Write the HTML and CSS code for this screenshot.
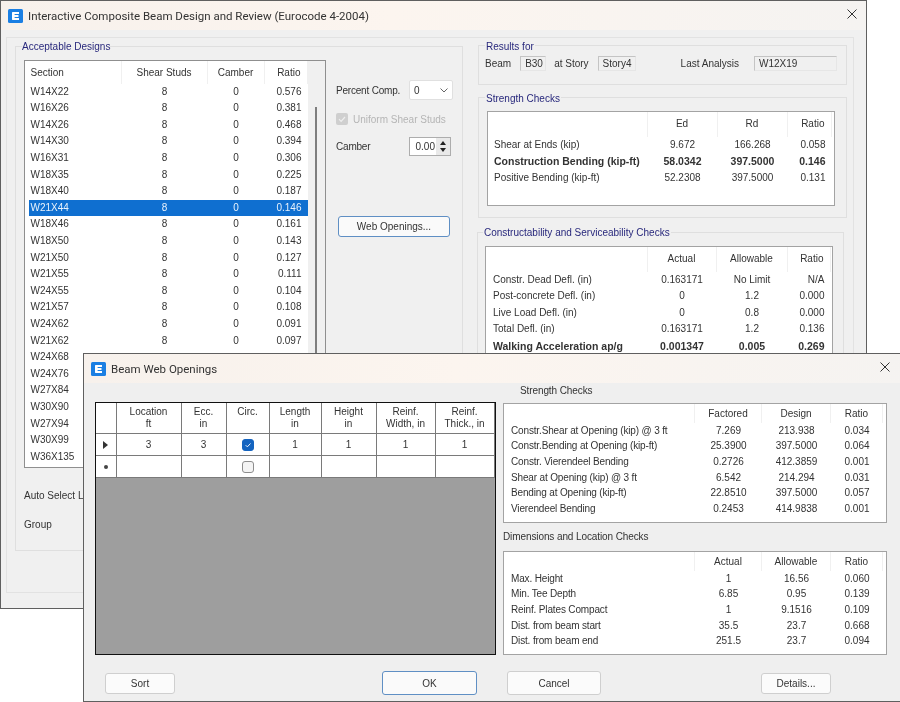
FILE: index.html
```html
<!DOCTYPE html>
<html lang="en">
<head>
<meta charset="utf-8">
<title>Interactive Composite Beam Design and Review</title>
<link rel="stylesheet" href="styles.css">
</head>
<body>
<div class="desktop">

  <section class="window main-window">
    <header class="titlebar">
      <svg class="app-icon" viewBox="0 0 15 14"><rect width="15" height="14" rx="1.5" fill="#1b7fe3"/><path d="M5 3h6v2H6.6v1.1H10.500v1.800H6.600V9H11v2H5C4.200 11 4 10.600 4 10V4C4 3.400 4.200 3 5 3Z" fill="#fff"/></svg>
      <span class="title-text">Interactive Composite Beam Design and Review (Eurocode 4-2004)</span>
      <svg class="close" viewBox="0 0 10 10"><path d="M.5.500l9 9M9.500.500l-9 9" stroke="#333" stroke-width="1" fill="none"/></svg>
    </header>
    <div class="panel">
      <div class="group designs">
        <span class="legend">Acceptable Designs</span>
        <div class="designs-top">
          <div class="listbox">
            <div class="list-rows">
              <div class="list-row list-head"><span class="c-name">Section</span><span>Shear Studs</span><span>Camber</span><span class="c-ratio">Ratio</span></div>
              <div class="list-row"><span class="c-name">W14X22</span><span>8</span><span>0</span><span class="c-ratio">0.576</span></div>
              <div class="list-row"><span class="c-name">W16X26</span><span>8</span><span>0</span><span class="c-ratio">0.381</span></div>
              <div class="list-row"><span class="c-name">W14X26</span><span>8</span><span>0</span><span class="c-ratio">0.468</span></div>
              <div class="list-row"><span class="c-name">W14X30</span><span>8</span><span>0</span><span class="c-ratio">0.394</span></div>
              <div class="list-row"><span class="c-name">W16X31</span><span>8</span><span>0</span><span class="c-ratio">0.306</span></div>
              <div class="list-row"><span class="c-name">W18X35</span><span>8</span><span>0</span><span class="c-ratio">0.225</span></div>
              <div class="list-row"><span class="c-name">W18X40</span><span>8</span><span>0</span><span class="c-ratio">0.187</span></div>
              <div class="list-row selected"><span class="c-name">W21X44</span><span>8</span><span>0</span><span class="c-ratio">0.146</span></div>
              <div class="list-row"><span class="c-name">W18X46</span><span>8</span><span>0</span><span class="c-ratio">0.161</span></div>
              <div class="list-row"><span class="c-name">W18X50</span><span>8</span><span>0</span><span class="c-ratio">0.143</span></div>
              <div class="list-row"><span class="c-name">W21X50</span><span>8</span><span>0</span><span class="c-ratio">0.127</span></div>
              <div class="list-row"><span class="c-name">W21X55</span><span>8</span><span>0</span><span class="c-ratio">0.111</span></div>
              <div class="list-row"><span class="c-name">W24X55</span><span>8</span><span>0</span><span class="c-ratio">0.104</span></div>
              <div class="list-row"><span class="c-name">W21X57</span><span>8</span><span>0</span><span class="c-ratio">0.108</span></div>
              <div class="list-row"><span class="c-name">W24X62</span><span>8</span><span>0</span><span class="c-ratio">0.091</span></div>
              <div class="list-row"><span class="c-name">W21X62</span><span>8</span><span>0</span><span class="c-ratio">0.097</span></div>
              <div class="list-row"><span class="c-name">W24X68</span></div>
              <div class="list-row"><span class="c-name">W24X76</span></div>
              <div class="list-row"><span class="c-name">W27X84</span></div>
              <div class="list-row"><span class="c-name">W30X90</span></div>
              <div class="list-row"><span class="c-name">W27X94</span></div>
              <div class="list-row"><span class="c-name">W30X99</span></div>
              <div class="list-row"><span class="c-name">W36X135</span></div>
            </div>
            <div class="list-scroll"><div class="list-thumb"></div></div>
          </div>
          <div class="options">
            <div class="opt-row opt-percent">
              <span class="opt-label">Percent Comp.</span>
              <div class="select"><span>0</span><svg viewBox="0 0 8 5" class="chev"><path d="M.5.500L4 4 7.500.500" fill="none" stroke="#666"/></svg></div>
            </div>
            <div class="opt-row opt-uniform">
              <span class="check-disabled"><svg viewBox="0 0 12 12"><path d="M3 6.200l2.100 2.100L9 4" fill="none" stroke="#eee" stroke-width="1.200"/></svg></span>
              <span class="disabled-text">Uniform Shear Studs</span>
            </div>
            <div class="opt-row opt-camber">
              <span class="opt-label">Camber</span>
              <div class="spinner">
                <span class="spin-value">0.00</span>
                <span class="spin-btns"><span class="spin-up"></span><span class="spin-down"></span></span>
              </div>
            </div>
            <button class="btn btn-default web-btn">Web Openings...</button>
          </div>
        </div>
        <div class="auto-label">Auto Select List</div>
        <div class="group-label">Group</div>
      </div>

      <div class="results">
        <div class="group results-for">
          <span class="legend">Results for</span>
          <div class="results-line">
            <span>Beam</span><span class="ro ro-beam">B30</span>
            <span class="lbl-story">at Story</span><span class="ro ro-story">Story4</span>
            <span class="lbl-last">Last Analysis</span><span class="ro ro-last">W12X19</span>
          </div>
        </div>

        <div class="group strength">
          <span class="legend">Strength Checks</span>
          <div class="checks checks-a">
            <div class="chk-row chk-head"><span></span><span>Ed</span><span>Rd</span><span>Ratio</span></div>
            <div class="chk-row"><span>Shear at Ends (kip)</span><span>9.672</span><span>166.268</span><span>0.058</span></div>
            <div class="chk-row bold"><span>Construction Bending (kip-ft)</span><span>58.0342</span><span>397.5000</span><span>0.146</span></div>
            <div class="chk-row"><span>Positive Bending (kip-ft)</span><span>52.2308</span><span>397.5000</span><span>0.131</span></div>
          </div>
        </div>

        <div class="group service">
          <span class="legend">Constructability and Serviceability Checks</span>
          <div class="checks checks-b">
            <div class="chk-row chk-head"><span></span><span>Actual</span><span>Allowable</span><span>Ratio</span></div>
            <div class="chk-row"><span>Constr. Dead Defl. (in)</span><span>0.163171</span><span>No Limit</span><span>N/A</span></div>
            <div class="chk-row"><span>Post-concrete Defl. (in)</span><span>0</span><span>1.2</span><span>0.000</span></div>
            <div class="chk-row"><span>Live Load Defl. (in)</span><span>0</span><span>0.8</span><span>0.000</span></div>
            <div class="chk-row"><span>Total Defl. (in)</span><span>0.163171</span><span>1.2</span><span>0.136</span></div>
            <div class="chk-row bold"><span>Walking Acceleration ap/g</span><span>0.001347</span><span>0.005</span><span>0.269</span></div>
          </div>
        </div>
      </div>
    </div>
  </section>

  <section class="window web-window">
    <header class="titlebar">
      <svg class="app-icon" viewBox="0 0 15 14"><rect width="15" height="14" rx="1.5" fill="#1b7fe3"/><path d="M5 3h6v2H6.6v1.1H10.500v1.800H6.600V9H11v2H5C4.200 11 4 10.600 4 10V4C4 3.400 4.200 3 5 3Z" fill="#fff"/></svg>
      <span class="title-text small">Beam Web Openings</span>
      <svg class="close" viewBox="0 0 10 10"><path d="M.5.500l9 9M9.500.500l-9 9" stroke="#333" stroke-width="1" fill="none"/></svg>
    </header>
    <div class="web-body">
      <div class="web-main">
        <div class="grid">
          <div class="grid-row grid-head">
            <span></span><span>Location<br>ft</span><span>Ecc.<br>in</span><span>Circ.</span><span>Length<br>in</span><span>Height<br>in</span><span>Reinf.<br>Width, in</span><span>Reinf.<br>Thick., in</span>
          </div>
          <div class="grid-row grid-data">
            <span class="marker"><i class="tri"></i></span><span>3</span><span>3</span>
            <span><i class="cb cb-on"><svg viewBox="0 0 12 12"><path d="M3.200 6.200l2 2L9 4.200" fill="none" stroke="#fff" stroke-width="1.100"/></svg></i></span>
            <span>1</span><span>1</span><span>1</span><span>1</span>
          </div>
          <div class="grid-row grid-data">
            <span class="marker"><i class="dot"></i></span><span></span><span></span>
            <span><i class="cb"></i></span>
            <span></span><span></span><span></span><span></span>
          </div>
        </div>
        <div class="web-side">
          <div class="side-title first">Strength Checks</div>
          <div class="checks checks-c">
            <div class="chk-row chk-head"><span></span><span>Factored</span><span>Design</span><span>Ratio</span></div>
            <div class="chk-row"><span>Constr.Shear at Opening (kip) @ 3 ft</span><span>7.269</span><span>213.938</span><span>0.034</span></div>
            <div class="chk-row"><span>Constr.Bending at Opening (kip-ft)</span><span>25.3900</span><span>397.5000</span><span>0.064</span></div>
            <div class="chk-row"><span>Constr. Vierendeel Bending</span><span>0.2726</span><span>412.3859</span><span>0.001</span></div>
            <div class="chk-row"><span>Shear at Opening (kip) @ 3 ft</span><span>6.542</span><span>214.294</span><span>0.031</span></div>
            <div class="chk-row"><span>Bending at Opening (kip-ft)</span><span>22.8510</span><span>397.5000</span><span>0.057</span></div>
            <div class="chk-row"><span>Vierendeel Bending</span><span>0.2453</span><span>414.9838</span><span>0.001</span></div>
          </div>
          <div class="side-title second">Dimensions and Location Checks</div>
          <div class="checks checks-d">
            <div class="chk-row chk-head"><span></span><span>Actual</span><span>Allowable</span><span>Ratio</span></div>
            <div class="chk-row"><span>Max. Height</span><span>1</span><span>16.56</span><span>0.060</span></div>
            <div class="chk-row"><span>Min. Tee Depth</span><span>6.85</span><span>0.95</span><span>0.139</span></div>
            <div class="chk-row"><span>Reinf. Plates Compact</span><span>1</span><span>9.1516</span><span>0.109</span></div>
            <div class="chk-row"><span>Dist. from beam start</span><span>35.5</span><span>23.7</span><span>0.668</span></div>
            <div class="chk-row"><span>Dist. from beam end</span><span>251.5</span><span>23.7</span><span>0.094</span></div>
          </div>
        </div>
      </div>
      <div class="web-footer">
        <button class="btn btn-sort">Sort</button>
        <button class="btn btn-default btn-ok">OK</button>
        <button class="btn btn-cancel">Cancel</button>
        <button class="btn btn-details">Details...</button>
      </div>
    </div>
  </section>

</div>
</body>
</html>
```
FILE: styles.css
```css
* { box-sizing: border-box; }
html, body { margin: 0; padding: 0; background: #fff; }
body { font-family: "Liberation Sans", Arial, sans-serif; font-size: 10px; color: #333; }

.desktop { position: relative; width: 900px; height: 702px; overflow: hidden; background: #fff; filter: blur(0.35px); }

.window { position: absolute; background: #f0f0f0; border: 1px solid #5f5f5f; }
.main-window { left: 0; top: 0; width: 867px; height: 609px; }
.web-window { left: 83px; top: 353px; width: 830px; height: 349px; background: #efefef; }

.titlebar { display: flex; align-items: center; height: 29px; padding-left: 7px; background: linear-gradient(90deg, #f7f1ec, #fcf5ef 45%, #f5f3f1); }
.app-icon { width: 15px; height: 14px; flex: none; }
.title-text { margin-left: 5px; font-family: Roboto, sans-serif; font-size: 11.500px; color: #333; white-space: nowrap; }
.close { position: absolute; top: 8px; right: 9px; width: 10px; height: 10px; }
.web-window .close { right: 22px; top: 8px; }

.panel { display: flex; align-items: flex-start; margin: 7px 12px 0 5px; height: 556px; padding: 8px 0 0 8px; border: 1px solid #e2e2e2; }

.group { border: 1px solid #dfdfdf; }
.legend { display: block; width: fit-content; height: 12px; line-height: 12px; margin: -5px 0 -2px 6px; padding: 0 1px; background: #f0f0f0; color: #28287c; }
.designs .legend { margin: -6px 0 -1px 6px; padding: 0; }
.service .legend { margin: -6px 0 -1px 5px; }

.designs { width: 448px; height: 505px; flex: none; }
.designs-top { display: flex; margin: 8px 0 0 8px; }

.listbox { display: flex; width: 302px; height: 408px; background: #fff; border: 1px solid #8f8f8f; padding-left: 4px; overflow: hidden; flex: none; }
.list-rows { width: 279px; flex: none; }
.list-row { display: grid; grid-template-columns: 92.500px 86px 57px 43px; height: 16.600px; line-height: 16.600px; text-align: center; }
.list-row .c-name { text-align: left; padding-left: 1.500px; }
.list-row .c-ratio { text-align: right; padding-right: 6px; }
.list-head { height: 22.700px; line-height: 23px; }
.list-head span { border-right: 1px solid #f0f0f0; }
.list-row.selected { background: #0f6fd0; color: #e8f2fc; }
.list-scroll { width: 17px; flex: none; background: #f0f0f0; padding: 46px 0 0 7px; }
.list-thumb { width: 2px; height: 400px; background: #7e7e7e; }

.options { margin-left: 10px; width: 118px; flex: none; }
.opt-row { display: flex; align-items: center; }
.opt-label { width: 73px; flex: none; letter-spacing: -0.200px; }
.opt-percent { margin-top: 20px; height: 20px; }
.select { display: flex; align-items: center; justify-content: space-between; width: 44px; height: 20px; padding: 0 4px; background: #fff; border: 1px solid #e0e0e0; border-radius: 2px; }
.chev { width: 8px; height: 5px; }
.opt-uniform { margin-top: 13px; height: 12px; }
.check-disabled { width: 12px; height: 12px; background: #cfcfcf; border-radius: 2px; flex: none; }
.check-disabled svg { display: block; width: 12px; height: 12px; }
.disabled-text { margin-left: 5px; color: #b5b5b5; }
.opt-camber { margin-top: 12px; height: 19px; }
.spinner { display: flex; align-items: center; width: 42px; height: 19px; background: #fff; border: 1px solid #adadad; }
.spin-value { width: 25px; text-align: right; }
.spin-btns { display: flex; flex-direction: column; justify-content: center; gap: 1px; width: 14px; height: 17px; margin-left: 1px; background: #e9e9e9; }
.spin-up, .spin-down { display: block; width: 0; height: 0; margin: 1px auto; border-left: 3px solid transparent; border-right: 3px solid transparent; }
.spin-up { border-bottom: 4px solid #222; }
.spin-down { border-top: 4px solid #222; }

.btn { display: block; padding: 0; font: inherit; color: #333; background: #fbfbfb; border: 1px solid #cfcfcf; border-radius: 3px; }
.btn-default { border: 1.500px solid #5f8fc4; background: #fafafa; }
.web-btn { width: 112px; height: 21px; margin: 60px 0 0 2px; }

.auto-label { margin: 22px 0 0 8px; }
.group-label { margin: 18px 0 0 8px; }

.results { margin-left: 15px; margin-top: -1px; width: 369px; flex: none; }
.results-for { height: 40px; }
.results-line { display: flex; align-items: center; height: 15px; margin: 5px 0 0 6px; }
.ro { display: block; height: 15px; line-height: 13px; padding-left: 4px; border: 1px solid #e6e6e6; border-top-color: #c4c4c4; border-left-color: #c4c4c4; background: #f0f0f0; }
.ro-beam { width: 26px; margin-left: 9px; }
.lbl-story { margin-left: 8px; }
.ro-story { width: 38px; margin-left: 9px; }
.lbl-last { margin-left: 45px; }
.ro-last { width: 83px; margin-left: 15px; }

.strength { height: 121px; margin-top: 12px; }
.service { width: 367px; height: 340px; margin: 14px 0 0 -1px; }

.checks { background: #fff; border: 1px solid #a3a3a3; }
.checks-a { width: 348px; height: 95px; margin: 8px 0 0 8px; border-width: 1.500px; }
.checks-b { width: 348px; height: 200px; margin: 8px 0 0 7px; border-width: 1.500px; }
.chk-row { display: grid; height: 16.600px; line-height: 16.600px; text-align: center; white-space: nowrap; }
.chk-row > span:first-child { text-align: left; }
.checks-a .chk-row { grid-template-columns: 159.500px 70px 70px 44px; }
.checks-a .chk-row > span:first-child { padding-left: 6px; }
.checks-b .chk-row { grid-template-columns: 161.500px 69px 71px 43px; }
.checks-b .chk-row > span:first-child { padding-left: 7px; }
.checks-a .chk-row > span:last-child, .checks-b .chk-row > span:last-child { text-align: right; padding-right: 6px; }
.checks-a .chk-head, .checks-b .chk-head { height: 24.600px; line-height: 24px; }
.chk-head span { border-right: 1px solid #f0f0f0; }
.bold { font-weight: bold; font-size: 10.500px; }

.web-body { padding: 19px 0 0 11px; }
.web-main { display: flex; align-items: flex-start; height: 254px; }
.grid { width: 401px; height: 253px; background: #9e9e9e; border: 1px solid #111; flex: none; }
.grid-row { display: grid; grid-template-columns: 20.500px 65px 45px 43px 52px 55px 59px 59px; background: #fff; border-bottom: 1px solid #7a7a7a; text-align: center; }
.grid-row > span { border-right: 1px solid #7a7a7a; display: flex; align-items: center; justify-content: center; }
.grid-head { height: 31px; line-height: 12px; }
.grid-head > span { display: block; padding-top: 3px; }
.grid-data { height: 22px; }
.marker i { display: block; }
.tri { width: 0; height: 0; margin-left: -1px; border-left: 5px solid #333; border-top: 4px solid transparent; border-bottom: 4px solid transparent; }
.dot { width: 4px; height: 4px; border-radius: 50%; background: #444; }
.cb { display: block; width: 12px; height: 12px; background: #f4f4f4; border: 1px solid #8d8d8d; border-radius: 3px; }
.cb-on { background: #1464c0; border-color: #1464c0; }
.cb-on svg { display: block; width: 10px; height: 10px; }

.web-side { margin: -18px 0 0 7px; width: 385px; flex: none; }
.side-title { height: 14px; line-height: 14px; letter-spacing: -0.100px; }
.side-title.first { margin-left: 17px; }
.side-title.second { margin-top: 7px; }
.checks-c { width: 384px; height: 120px; margin-top: 5px; }
.checks-d { width: 384px; height: 104px; margin-top: 7px; }
.checks-c .chk-row, .checks-d .chk-row { grid-template-columns: 191px 67px 69px 52px; height: 15.700px; line-height: 15.700px; }
.checks-c .chk-row > span:first-child, .checks-d .chk-row > span:first-child { padding-left: 7px; letter-spacing: -0.150px; }
.checks-c .chk-head, .checks-d .chk-head { height: 18.500px; line-height: 19px; }

.web-footer { display: flex; align-items: center; height: 24px; margin-top: 15px; }
.btn-sort { width: 70px; height: 21px; margin-left: 10px; }
.btn-ok { width: 95px; height: 24px; margin-left: 207px; }
.btn-cancel { width: 94px; height: 24px; margin-left: 30px; }
.btn-details { width: 70px; height: 21px; margin-left: 160px; }
```
